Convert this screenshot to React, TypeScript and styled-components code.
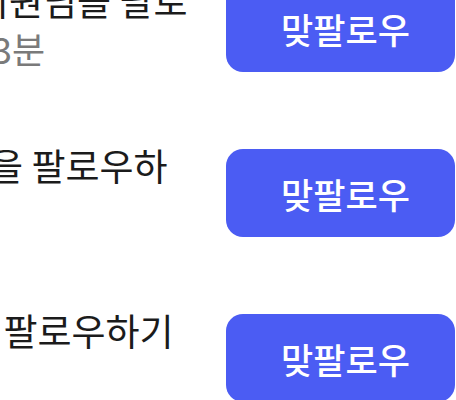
import styled, { createGlobalStyle } from "styled-components";

const GlobalStyle = createGlobalStyle`
  html, body {
    margin: 0;
    background: #ffffff;
    overflow: hidden;
  }
  body {
    font-family: "Noto Sans CJK KR", "Noto Sans", sans-serif;
  }
`;

const List = styled.ul`
  list-style: none;
  margin: -16px 0 0;
  padding: 0;
  display: flex;
  flex-direction: column;
  gap: 77px;
`;

const Row = styled.li`
  display: flex;
  align-items: flex-start;
  justify-content: space-between;
  height: 88px;
`;

const Body = styled.div`
  display: flex;
  flex-direction: column;
  margin-top: -6px;
`;

// the start of each line runs past the left edge, so lines carry their own offset
const Message = styled.p<{ $shift: number }>`
  margin: 0 0 0 ${(p) => p.$shift}px;
  font-size: 37px;
  line-height: 44px;
  color: #1b1b1b;
  white-space: nowrap;
`;

const Time = styled.span<{ $shift: number }>`
  margin: 5px 0 0 ${(p) => p.$shift}px;
  font-size: 36px;
  line-height: 43px;
  color: #7a7a7a;
  white-space: nowrap;
`;

const FollowButton = styled.button`
  flex-shrink: 0;
  width: 229px;
  height: 88px;
  margin-right: 1px;
  padding: 0 0 0 10px;
  border: none;
  border-radius: 17px;
  background: #4b5cf3;
  color: #ffffff;
  font-family: inherit;
  font-size: 35px;
  font-weight: 500;
  cursor: pointer;
`;

type Notice = { id: number; text: string; shift: number; time?: string };

const notices: Notice[] = [
  { id: 1, text: "회원님을 팔로", shift: -25, time: "13분" },
  { id: 2, text: "회원님을 팔로우하", shift: -113 },
  { id: 3, text: "회원님을 팔로우하기", shift: -141 },
];

export default function App() {
  return (
    <>
      <GlobalStyle />
      <List>
        {notices.map((n) => (
          <Row key={n.id}>
            <Body>
              <Message $shift={n.shift}>{n.text}</Message>
              {n.time && <Time $shift={-28}>{n.time}</Time>}
            </Body>
            <FollowButton>맞팔로우</FollowButton>
          </Row>
        ))}
      </List>
    </>
  );
}
